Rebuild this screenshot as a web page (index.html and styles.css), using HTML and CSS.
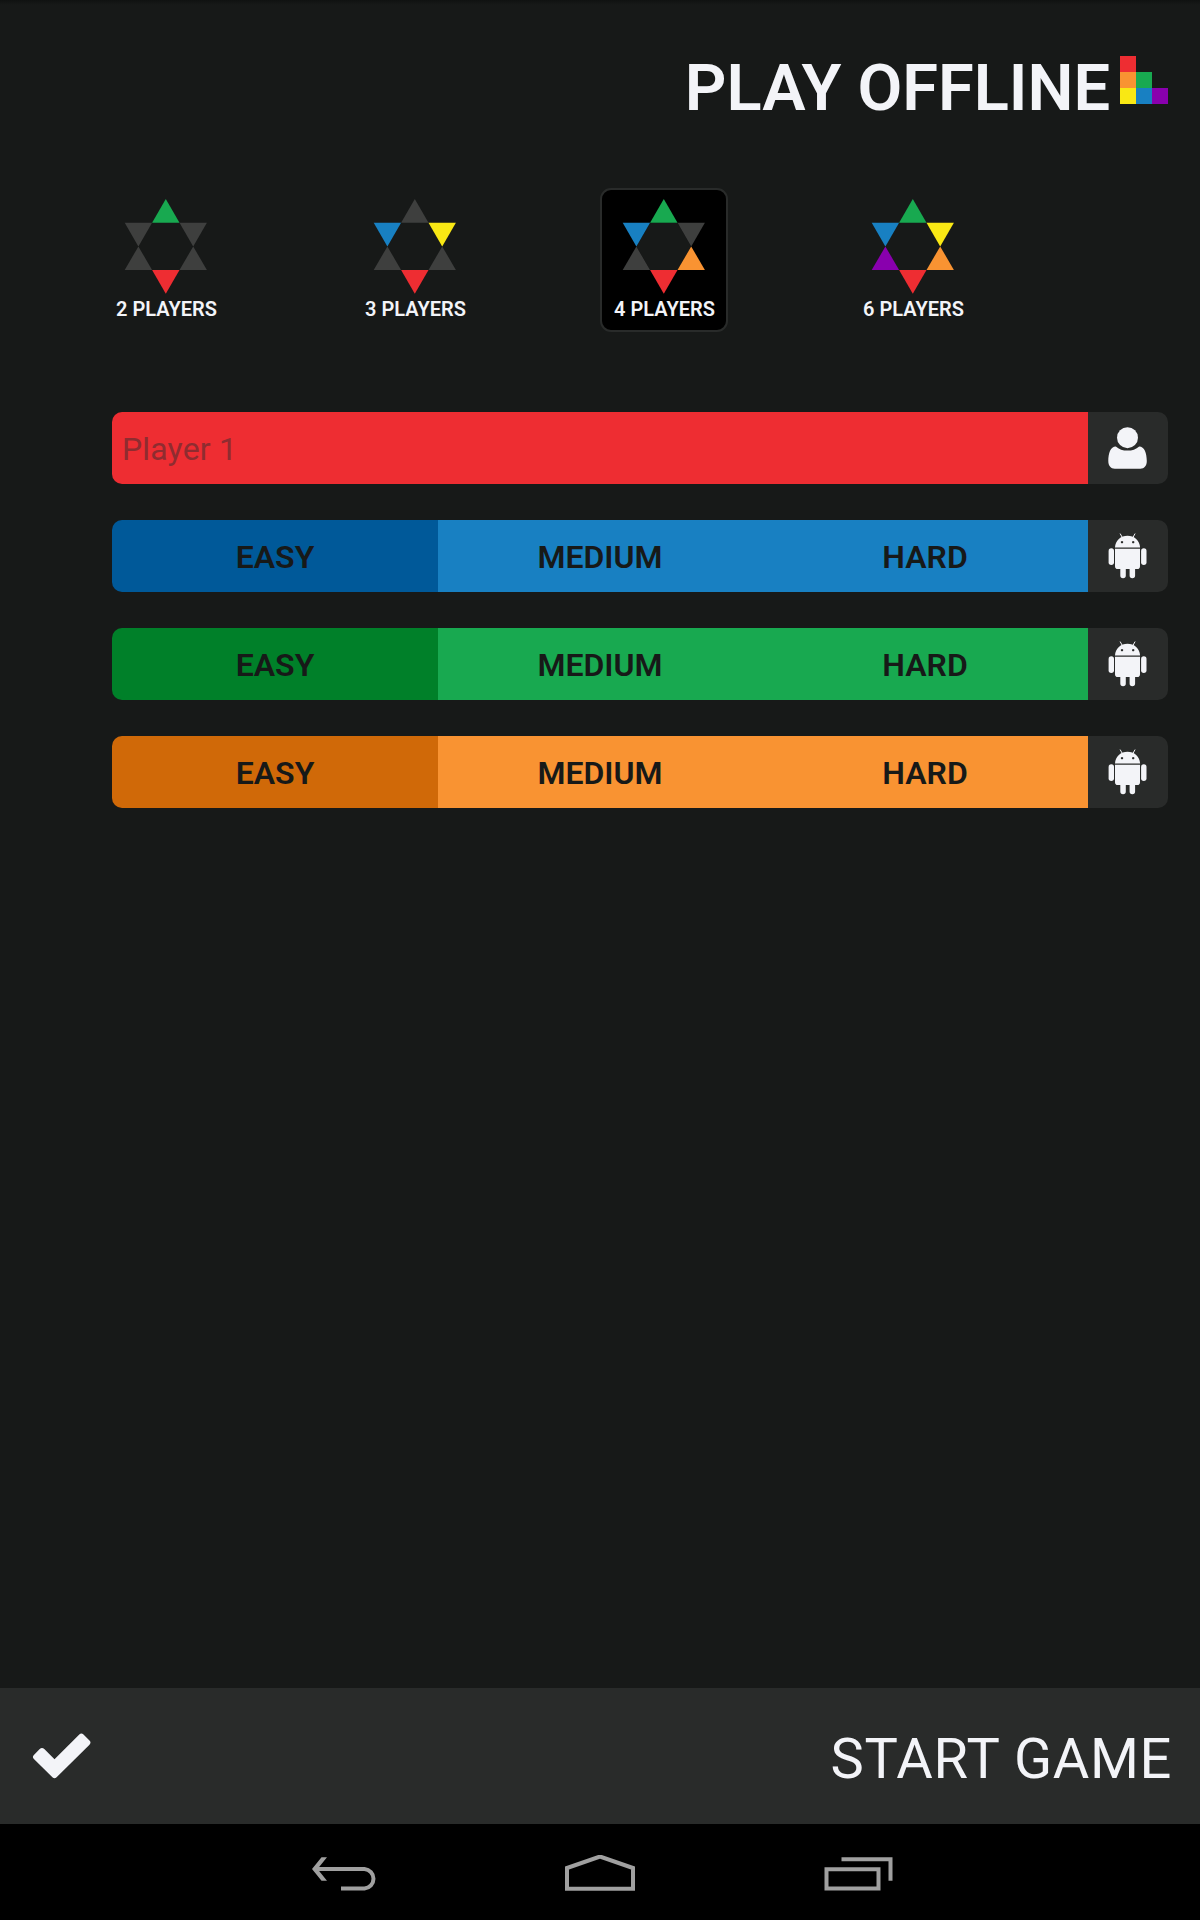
FILE: index.html
```html
<!DOCTYPE html>
<html lang="en">
<head>
<meta charset="utf-8">
<title>Play Offline</title>
<link rel="stylesheet" href="styles.css">
</head>
<body>
<svg width="0" height="0" class="defs" aria-hidden="true">
  <symbol id="android" viewBox="0 0 40 48">
    <g transform="translate(0.300 1.700)">
    <path d="M13 1.200l2.200 4M27.600 1.200l-2.200 4" stroke="currentColor" stroke-width="1" stroke-linecap="round"/>
    <path fill-rule="evenodd" d="M7.700 14.800C8 7.600 13.500 3 20.200 3s12.300 4.600 12.600 11.800zM14.700 8.200a1.200 1.200 0 1 0 .01 0zM25.900 8.200a1.200 1.200 0 1 0 .01 0z"/>
    <path d="M7.700 16h25v17.600a2.800 2.800 0 0 1-2.800 2.800h-2.100v6.300a2.750 2.750 0 0 1-5.500 0v-6.300h-3.800v6.300a2.750 2.750 0 0 1-5.500 0v-6.300h-2.500a2.800 2.800 0 0 1-2.800-2.800z"/>
    <rect x="1.300" y="15.500" width="5.400" height="16.800" rx="2.700"/>
    <rect x="33.800" y="15.500" width="5.400" height="16.800" rx="2.700"/>
    </g>
  </symbol>
</svg>
<main class="screen">
  <header class="header">
    <h1 class="title">PLAY OFFLINE</h1>
    <svg class="logo" viewBox="0 0 3 3" shape-rendering="crispEdges">
      <path class="red" d="M0 0h1v1H0z"/><path class="orange" d="M0 1h1v1H0z"/><path class="green" d="M1 1h1v1H1z"/>
      <path class="yellow" d="M0 2h1v1H0z"/><path class="blue" d="M1 2h1v1H1z"/><path class="purple" d="M2 2h1v1H2z"/>
    </svg>
  </header>

  <nav class="modes">
    <div class="mode">
      <svg class="star" viewBox="-0.700 0 84 95"><path class="hex" d="M27.400 23.700h27.400l13.700 23.700-13.700 23.700H27.400L13.700 47.400z"/><path class="green" d="M41.100 0l13.700 23.700H27.400z"/><path class="off" d="M54.800 23.700h27.400L68.500 47.400z"/><path class="off" d="M68.500 47.400l13.700 23.700H54.800z"/><path class="red" d="M27.400 71.100h27.400L41.100 94.800z"/><path class="off" d="M13.700 47.400l13.700 23.700H0z"/><path class="off" d="M0 23.700h27.400L13.700 47.400z"/></svg>
      <span class="mode-label">2 PLAYERS</span>
    </div>
    <div class="mode">
      <svg class="star" viewBox="-0.700 0 84 95"><path class="hex" d="M27.400 23.700h27.400l13.700 23.700-13.700 23.700H27.400L13.700 47.400z"/><path class="off" d="M41.100 0l13.700 23.700H27.400z"/><path class="yellow" d="M54.800 23.700h27.400L68.500 47.400z"/><path class="off" d="M68.500 47.400l13.700 23.700H54.800z"/><path class="red" d="M27.400 71.100h27.400L41.100 94.800z"/><path class="off" d="M13.700 47.400l13.700 23.700H0z"/><path class="blue" d="M0 23.700h27.400L13.700 47.400z"/></svg>
      <span class="mode-label">3 PLAYERS</span>
    </div>
    <div class="mode selected">
      <svg class="star" viewBox="-0.700 0 84 95"><path class="hex" d="M27.400 23.700h27.400l13.700 23.700-13.700 23.700H27.400L13.700 47.400z"/><path class="green" d="M41.100 0l13.700 23.700H27.400z"/><path class="off" d="M54.800 23.700h27.400L68.500 47.400z"/><path class="orange" d="M68.500 47.400l13.700 23.700H54.800z"/><path class="red" d="M27.400 71.100h27.400L41.100 94.800z"/><path class="off" d="M13.700 47.400l13.700 23.700H0z"/><path class="blue" d="M0 23.700h27.400L13.700 47.400z"/></svg>
      <span class="mode-label">4 PLAYERS</span>
    </div>
    <div class="mode">
      <svg class="star" viewBox="-0.700 0 84 95"><path class="hex" d="M27.400 23.700h27.400l13.700 23.700-13.700 23.700H27.400L13.700 47.400z"/><path class="green" d="M41.100 0l13.700 23.700H27.400z"/><path class="yellow" d="M54.800 23.700h27.400L68.500 47.400z"/><path class="orange" d="M68.500 47.400l13.700 23.700H54.800z"/><path class="red" d="M27.400 71.100h27.400L41.100 94.800z"/><path class="purple" d="M13.700 47.400l13.700 23.700H0z"/><path class="blue" d="M0 23.700h27.400L13.700 47.400z"/></svg>
      <span class="mode-label">6 PLAYERS</span>
    </div>
  </nav>

  <section class="players">
    <div class="player player-red">
      <div class="name">Player 1</div>
      <div class="kind"><svg class="kind-icon" viewBox="0 0 40 48"><circle cx="20.500" cy="14.700" r="10.500"/><path d="M8.800 23.400c3.100 2.800 7.100 4.200 11.700 4.200s8.600-1.400 11.700-4.200c5.200.2 7.600 6.500 7.600 14.600 0 4.600-2.400 7.700-6.500 7.700H7.800C3.700 45.700 1.300 42.600 1.300 38c0-8.100 2.300-14.400 7.500-14.600z"/></svg></div>
    </div>
    <div class="player player-blue">
      <div class="level active">EASY</div><div class="level">MEDIUM</div><div class="level">HARD</div>
      <div class="kind"><svg class="kind-icon"><use href="#android"/></svg></div>
    </div>
    <div class="player player-green">
      <div class="level active">EASY</div><div class="level">MEDIUM</div><div class="level">HARD</div>
      <div class="kind"><svg class="kind-icon"><use href="#android"/></svg></div>
    </div>
    <div class="player player-orange">
      <div class="level active">EASY</div><div class="level">MEDIUM</div><div class="level">HARD</div>
      <div class="kind"><svg class="kind-icon"><use href="#android"/></svg></div>
    </div>
  </section>

  <footer class="start">
    <svg class="check" viewBox="0 0 60 46"><path d="M2.100 26l5.800-5.900q2.300-2.100 4.600 0L22.700 30.300 47.500 5.600q2-2 4.200 0l6 5.900q2 2.100 0 4.200L24.800 48.200q-2.100 1.900-4.200 0L2.100 30q-2-2 0-4z" transform="translate(-0.200 -4)"/></svg>
    <span class="start-label">START GAME</span>
  </footer>

  <div class="system">
    <svg class="sys-icon" viewBox="0 0 72 40"><path d="M5 14h47.500a10 9.800 0 0 1 0 19.500H29"/><path class="solid" d="M0 14L9.500 2.300H15L5.500 14 15 25.700H9.500z"/></svg>
    <svg class="sys-icon" viewBox="0 0 72 40"><path d="M3 33.700V13L36 1.500 69 13v20.700z"/></svg>
    <svg class="sys-icon" viewBox="0 0 72 40"><path d="M17.500 4.300h49v21.500M2.500 14.300h52v19.300h-52z"/></svg>
  </div>
</main>
</body>
</html>
```
FILE: styles.css
```css
* { box-sizing: border-box; }
body {
  margin: 0;
  background: #171918;
  color: #f3f4f8;
  font-family: Roboto, "Liberation Sans", sans-serif;
}
.defs { position: absolute; }
.screen {
  display: flex;
  flex-direction: column;
  width: 1200px;
  height: 1920px;
  background: linear-gradient(#101211, #171918 5px);
}
.red { fill: #ee2d32; }
.orange { fill: #f99332; }
.green { fill: #18a950; }
.yellow { fill: #f9e814; }
.blue { fill: #1880c2; }
.purple { fill: #8900ae; }
.off { fill: #3e3f3e; }
.hex { fill: #171918; }

.header {
  display: flex;
  justify-content: flex-end;
  align-items: flex-start;
  gap: 10px;
  height: 188px;
  padding: 50px 32px 0 0;
}
.title {
  margin: 0;
  font-size: 65px;
  font-weight: 650;
  line-height: 76px;
  letter-spacing: -0.05px;
  white-space: nowrap;
}
.logo { width: 48px; height: 48px; margin-top: 6px; }

.modes { display: flex; gap: 121px; height: 144px; padding-left: 102px; }
.mode {
  display: flex;
  flex-direction: column;
  align-items: center;
  width: 128px;
  height: 144px;
  padding-top: 9px;
  border: 2px solid transparent;
  border-radius: 11px;
}
.selected { background: #000; border-color: #292b2a; }
.star { width: 84px; height: 95px; }
.mode-label {
  margin: 3px 0 0 1px;
  font-size: 20px;
  font-weight: 650;
  line-height: 24px;
  white-space: nowrap;
}

.players {
  display: flex;
  flex: 1;
  flex-direction: column;
  gap: 36px;
  padding: 80px 32px 0 112px;
}
.player {
  display: flex;
  height: 72px;
  border-radius: 10px;
  overflow: hidden;
  color: #171918;
  font-size: 32px;
}
.name {
  flex: 1;
  padding: 1px 0 0 10px;
  line-height: 73px;
  letter-spacing: 0.15px;
  color: #8f2c30;
}
.level {
  width: 325px;
  padding: 1px 1px 0 0;
  line-height: 73px;
  font-weight: 650;
  text-align: center;
}
.active { width: 326px; padding-right: 0; }
.player-red .name { background: #ee2d32; }
.player-blue .level { background: #1880c2; }
.player-blue .active { background: #005999; }
.player-green .level { background: #18a950; }
.player-green .active { background: #008029; }
.player-orange .level { background: #f99332; }
.player-orange .active { background: #d06908; }
.kind {
  width: 80px;
  padding: 11px 0 0 19px;
  background: #292b2a;
  color: #f3f4f8;
}
.kind-icon { display: block; width: 40px; height: 48px; fill: #f3f4f8; }

.start {
  display: flex;
  align-items: center;
  justify-content: space-between;
  height: 136px;
  padding: 0 28px 0 32px;
  background: #292b2a;
}
.check { width: 60px; height: 46px; fill: #f3f4f8; }
.start-label {
  padding-top: 5px;
  font-size: 56px;
  line-height: 66px;
  letter-spacing: 0.65px;
  white-space: nowrap;
}

.system {
  display: flex;
  justify-content: space-between;
  height: 96px;
  padding: 31px 304px 0 312px;
  background: #000;
}
.sys-icon { width: 72px; height: 40px; fill: none; stroke: #a0a0a0; stroke-width: 4; }
.sys-icon:nth-child(2) { margin-left: -8px; }
.sys-icon .solid { fill: #a0a0a0; stroke: none; }
```
